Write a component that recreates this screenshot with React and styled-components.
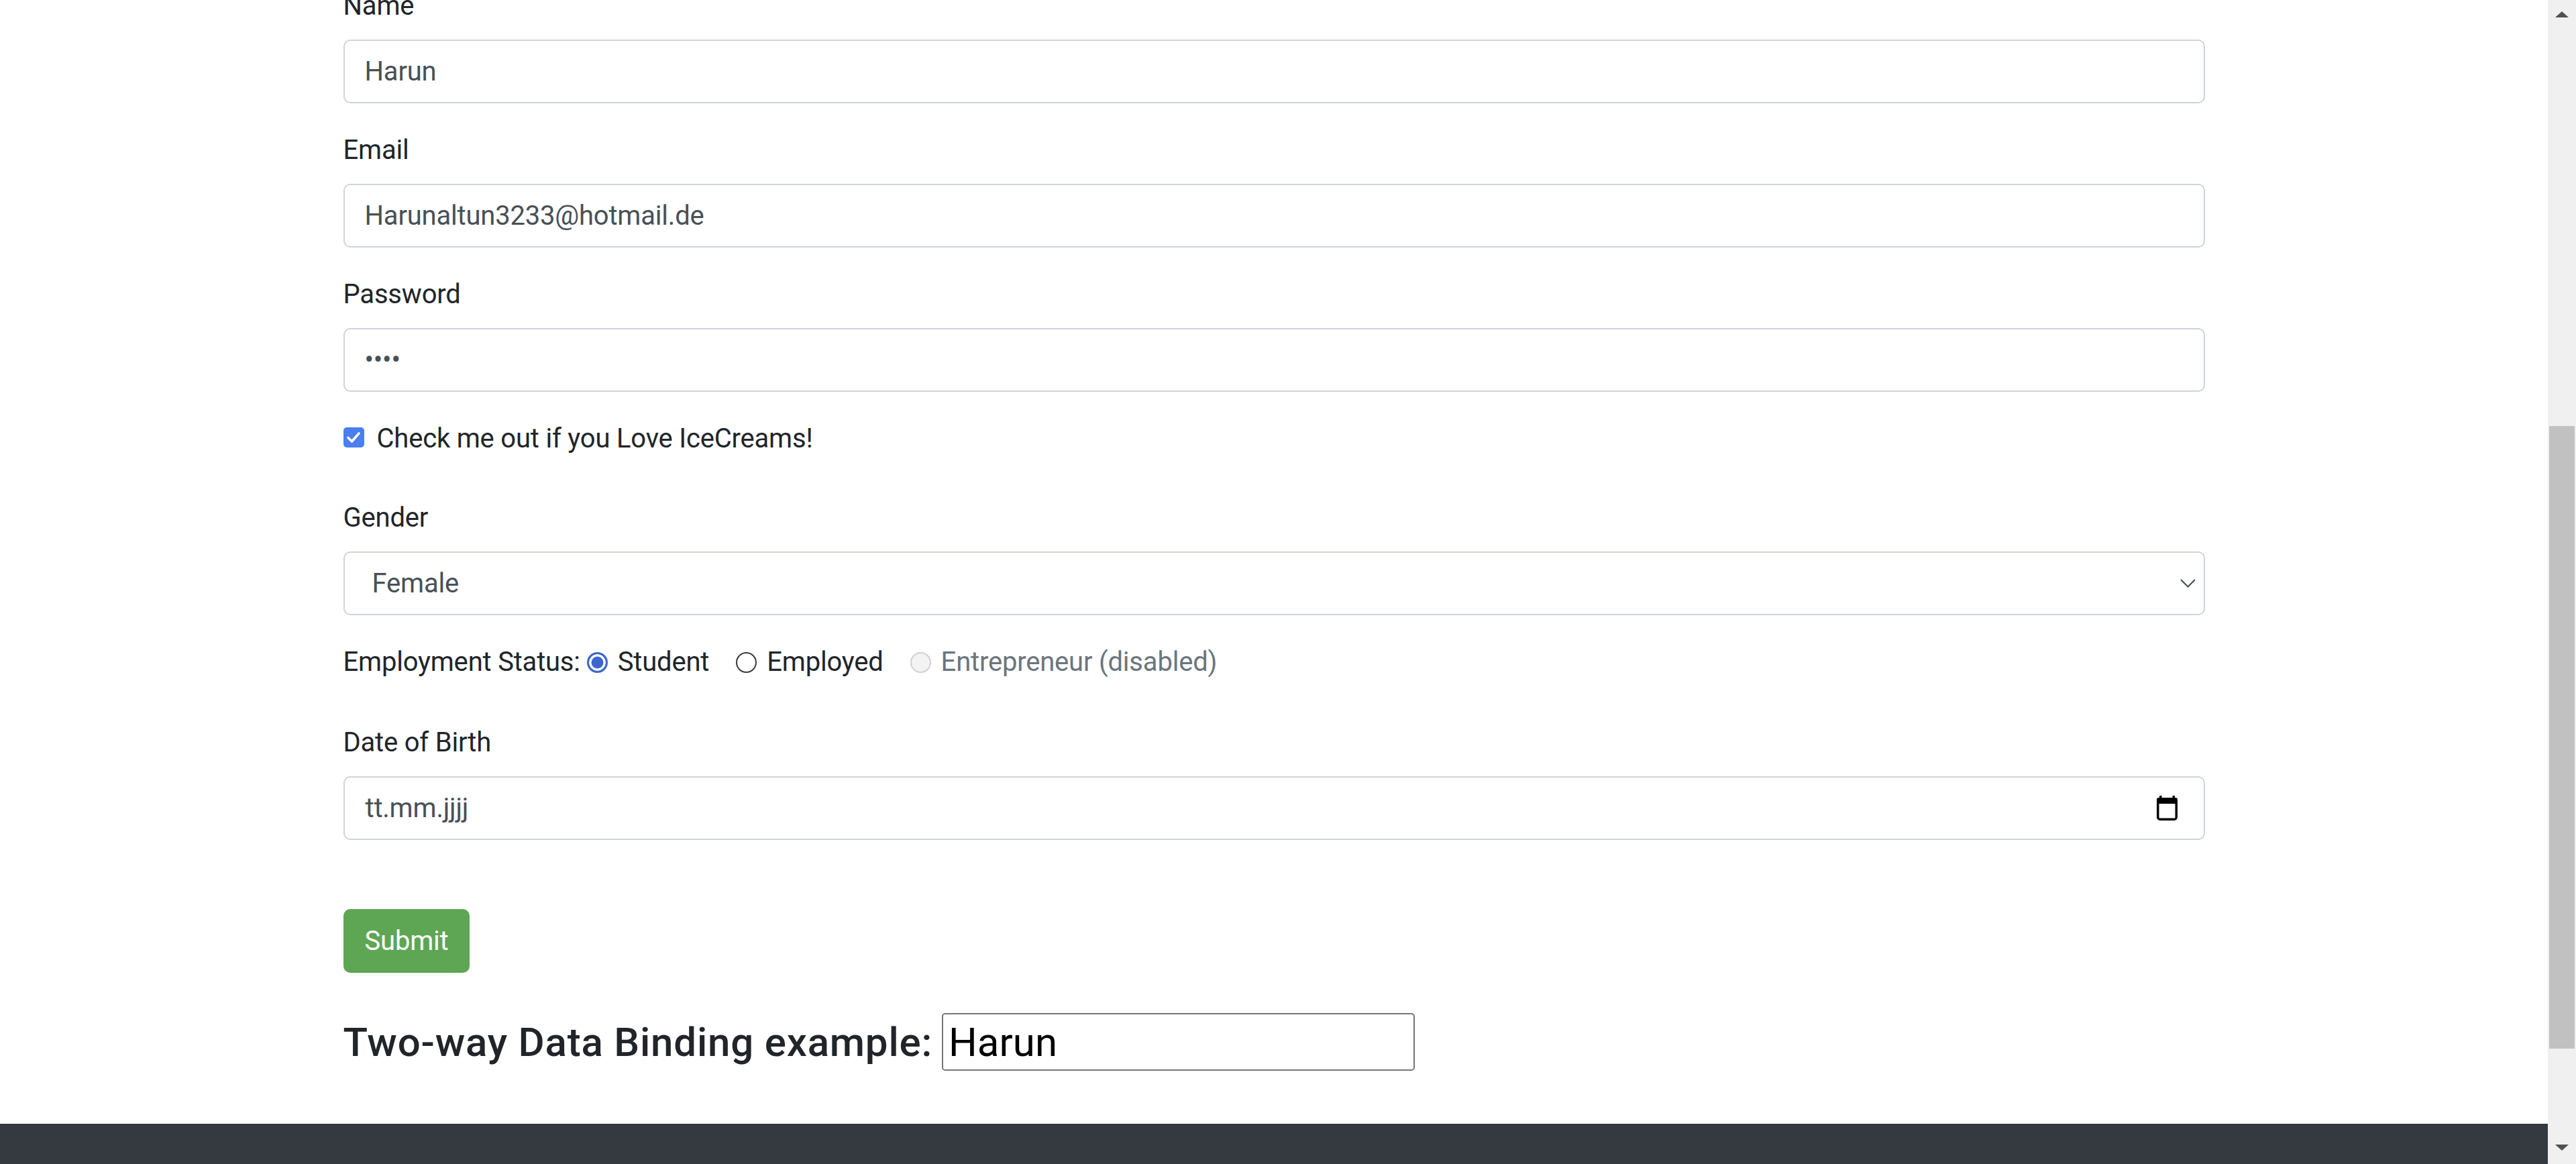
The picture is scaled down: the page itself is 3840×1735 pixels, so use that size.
import React from 'react';
import styled, { createGlobalStyle } from 'styled-components';

const GlobalStyle = createGlobalStyle`
  html, body {
    margin: 0;
    padding: 0;
    overflow: hidden;
    background: #fff;
  }
  body {
    font-family: Roboto, "Noto Sans", Arial, sans-serif;
    color: #212529;
  }
  * { box-sizing: border-box; }
`;

const Screen = styled.div`
  display: flex;
  width: 3840px;
  height: 1735px;
  overflow: hidden;
`;

const Main = styled.div`
  flex: 1;
  display: flex;
  flex-direction: column;
  overflow: hidden;
`;

const Content = styled.div`
  flex: 1;
  overflow: hidden;
`;

const Container = styled.div`
  width: 2850px;
  margin: 0 auto;
  padding: 0 37.5px;
  margin-top: -21px;
  font-size: 40px;
  line-height: 60px;
  letter-spacing: -0.2px;
`;

const FormGroup = styled.div`
  margin-bottom: ${p => p.mb || 40}px;
`;

const Label = styled.label`
  display: block;
  margin-bottom: 20px;
  color: #212529;
`;

const Input = styled.input`
  display: block;
  width: 100%;
  height: 95px;
  padding: 15px 30px;
  font-family: inherit;
  font-size: 40px;
  line-height: 60px;
  letter-spacing: inherit;
  color: #495057;
  background: #fff;
  border: 2.5px solid #ced4da;
  border-radius: 10px;
  outline: none;
`;

const SelectBox = styled.div`
  display: flex;
  align-items: center;
  justify-content: space-between;
  height: 95px;
  padding: 0 12px 0 41px;
  color: #495057;
  border: 2.5px solid #ced4da;
  border-radius: 10px;
`;

const DateBox = styled.div`
  display: flex;
  align-items: center;
  justify-content: space-between;
  height: 95px;
  padding: 0 39px 0 31px;
  color: #495057;
  border: 2.5px solid #ced4da;
  border-radius: 10px;
`;

const CheckRow = styled.div`
  display: flex;
  align-items: center;
  gap: 19px;
  height: 60px;
  margin-bottom: 58px;
`;

const CheckBox = styled.span`
  display: inline-flex;
  align-items: center;
  justify-content: center;
  width: 31px;
  height: 30px;
  border-radius: 5px;
  background: #4a7ef1;
  margin-top: -4px;
`;

const RadioRow = styled.div`
  display: flex;
  align-items: center;
  height: 60px;
  margin-bottom: 60px;
`;

const RadioOption = styled.span`
  display: inline-flex;
  align-items: center;
  gap: 15px;
  margin-left: ${p => (p.first ? 10 : 40)}px;
  color: ${p => (p.disabled ? '#6c757d' : '#212529')};
`;

const Radio = styled.span`
  display: inline-block;
  width: 31px;
  height: 31px;
  border-radius: 50%;
  border: ${p => (p.checked ? '3px solid #3d66cc' : p.disabled ? '2.5px solid #d1d1d1' : '2.5px solid #3b3b3b')};
  background: ${p => (p.checked ? '#3d66cc' : p.disabled ? '#f3f3f3' : '#fff')};
  box-shadow: ${p => (p.checked ? 'inset 0 0 0 3.5px #fff' : 'none')};
`;

const SubmitButton = styled.button`
  display: block;
  margin-top: 103px;
  height: 95px;
  padding: 0 30px;
  font-family: inherit;
  font-size: 40px;
  line-height: 60px;
  letter-spacing: inherit;
  color: #fff;
  background: #5ea653;
  border: 2.5px solid #5ea653;
  border-radius: 10px;
`;

const Heading = styled.h4`
  display: flex;
  align-items: baseline;
  gap: 14px;
  margin: 60px 0 0;
  font-size: 60px;
  font-weight: 500;
  line-height: 72px;
  letter-spacing: 0.8px;
  color: #212529;
`;

const BindInput = styled.input`
  width: 705px;
  height: 86px;
  padding: 0 8px;
  font-family: inherit;
  font-size: 60px;
  font-weight: 400;
  letter-spacing: 0;
  color: #000;
  border: 2.5px solid #767676;
  border-radius: 5px;
  outline: none;
`;

const Footer = styled.footer`
  height: 60px;
  background: #343a40;
`;

const ScrollTrack = styled.div`
  width: 42px;
  height: 1735px;
  background: #f0f0f0;
  display: flex;
  flex-direction: column;
  align-items: center;
`;

const Arrow = styled.div`
  height: ${p => p.h}px;
  display: flex;
  align-items: ${p => (p.down ? 'flex-start' : 'flex-end')};
  justify-content: center;
`;

const Thumb = styled.div`
  width: 38px;
  height: 928px;
  margin-top: ${p => p.top}px;
  background: #c1c1c1;
`;

const Spacer = styled.div`
  flex: 1;
`;

const Chevron = () => (
  <svg width="23" height="13" viewBox="0 0 23 13">
    <polyline points="1,1 11.5,11.5 22,1" fill="none" stroke="#495057" strokeWidth="2.2" />
  </svg>
);

const CalendarIcon = () => (
  <svg width="31" height="37" viewBox="0 0 31 37">
    <rect x="1.75" y="5" width="27.5" height="30.25" rx="3" fill="none" stroke="#000" strokeWidth="3.5" />
    <rect x="0" y="3" width="31" height="9" rx="3" fill="#000" />
    <rect x="4" y="0" width="3.5" height="5" fill="#000" />
    <rect x="23.5" y="0" width="3.5" height="5" fill="#000" />
  </svg>
);

function App() {
  return (
    <Screen>
      <GlobalStyle />
      <Main>
        <Content>
          <Container>
            <FormGroup>
              <Label>Name</Label>
              <Input type="text" defaultValue="Harun" readOnly />
            </FormGroup>
            <FormGroup>
              <Label>Email</Label>
              <Input type="email" defaultValue="Harunaltun3233@hotmail.de" readOnly />
            </FormGroup>
            <FormGroup>
              <Label>Password</Label>
              <Input type="password" defaultValue="1234" readOnly />
            </FormGroup>

            <CheckRow>
              <CheckBox>
                <svg width="22" height="18" viewBox="0 0 22 18">
                  <polyline points="3,9.5 8.5,15 19,3" fill="none" stroke="#fff" strokeWidth="3.6" strokeLinecap="round" strokeLinejoin="round" />
                </svg>
              </CheckBox>
              <span>Check me out if you Love IceCreams!</span>
            </CheckRow>

            <FormGroup>
              <Label>Gender</Label>
              <SelectBox>
                <span>Female</span>
                <Chevron />
              </SelectBox>
            </FormGroup>

            <RadioRow>
              <span>Employment Status:</span>
              <RadioOption first>
                <Radio checked />
                Student
              </RadioOption>
              <RadioOption>
                <Radio />
                Employed
              </RadioOption>
              <RadioOption disabled>
                <Radio disabled />
                Entrepreneur (disabled)
              </RadioOption>
            </RadioRow>

            <FormGroup>
              <Label>Date of Birth</Label>
              <DateBox>
                <span>tt.mm.jjjj</span>
                <CalendarIcon />
              </DateBox>
            </FormGroup>

            <SubmitButton type="button">Submit</SubmitButton>

            <Heading>
              Two-way Data Binding example:
              <BindInput type="text" defaultValue="Harun" readOnly />
            </Heading>
          </Container>
        </Content>
        <Footer />
      </Main>
      <ScrollTrack>
        <Arrow h={26}>
          <svg width="20" height="9" viewBox="0 0 20 9"><polygon points="0,9 10,0 20,9" fill="#505050" /></svg>
        </Arrow>
        <Thumb top={609} />
        <Spacer />
        <Arrow h={29} down>
          <svg width="20" height="9" viewBox="0 0 20 9"><polygon points="0,0 10,9 20,0" fill="#505050" /></svg>
        </Arrow>
      </ScrollTrack>
    </Screen>
  );
}

export default App;
